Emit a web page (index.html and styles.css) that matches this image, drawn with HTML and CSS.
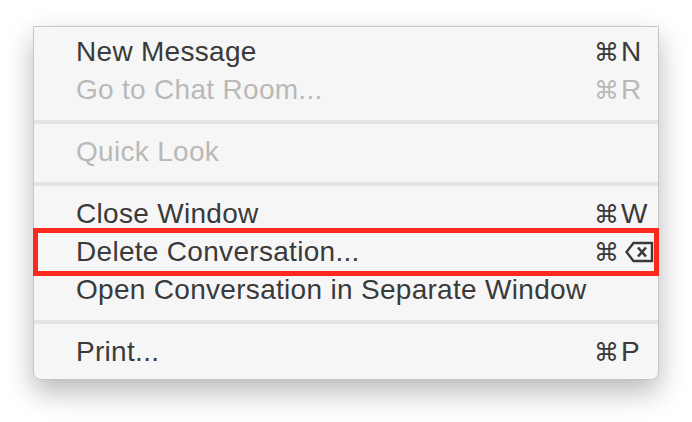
FILE: index.html
```html
<!DOCTYPE html>
<html>
<head>
    <meta charset="utf-8">
    <link rel="stylesheet" href="styles.css">
</head>
<body>
    <div class="menu">
        <div class="item"><span class="label">New Message</span><span class="key"><span class="cmd">⌘</span>N</span></div>
        <div class="item disabled"><span class="label">Go to Chat Room...</span><span class="key"><span class="cmd">⌘</span>R</span></div>
        <div class="sep"></div>
        <div class="item disabled"><span class="label">Quick Look</span></div>
        <div class="sep"></div>
        <div class="item"><span class="label">Close Window</span><span class="key"><span class="cmd">⌘</span>W</span></div>
        <div class="item marked"><span class="label">Delete Conversation...</span><span class="key"><span class="cmd">⌘</span><svg class="bksp" width="30" height="22" viewBox="0 0 30 22"><path d="M8.5 2 H27 V20 H8.5 L1.5 11 Z" fill="none" stroke="#3a3a3a" stroke-width="2.4" stroke-linejoin="miter"/><path d="M13 6.5 L21 15.5 M21 6.5 L13 15.5" stroke="#3a3a3a" stroke-width="2.6"/></svg></span></div>
        <div class="item"><span class="label">Open Conversation in Separate Window</span></div>
        <div class="sep"></div>
        <div class="item"><span class="label">Print...</span><span class="key"><span class="cmd">⌘</span>P</span></div>
    </div>
</body>
</html>
```

FILE: styles.css
```css
body {
    margin: 0;
    height: 422px;
    background: #ffffff;
    font-family: "Liberation Sans", Arial, sans-serif;
}

.menu {
    margin: 26px 0 0 33px;
    width: 626px;
    box-sizing: border-box;
    background: #f6f6f6;
    border: 1px solid #c6c6c6;
    border-radius: 0 0 8px 8px;
    padding: 6px 0 8px;
    box-shadow: 0 12px 28px rgba(0, 0, 0, 0.28);
}

.item {
    position: relative;
    height: 38px;
    display: flex;
    align-items: center;
    padding-left: 42px;
    font-size: 28px;
    color: #3a3a3a;
    letter-spacing: 0.3px;
}

.item.disabled {
    color: #b9b9b9;
}

.label {
    flex: 1;
    white-space: nowrap;
}

.key {
    width: 64px;
    display: flex;
    align-items: center;
    letter-spacing: 0;
}

.cmd {
    font-family: "DejaVu Sans", sans-serif;
    font-size: 25px;
    margin-right: 2px;
}

.bksp {
    margin-left: 4px;
}

.item.marked::after {
    content: "";
    position: absolute;
    left: -1px;
    right: -1px;
    top: -5px;
    bottom: -5px;
    border: 5px solid #fc2a1c;
}

.sep {
    height: 4px;
    background: #e4e4e4;
    margin: 11px 0 9px;
}
```
